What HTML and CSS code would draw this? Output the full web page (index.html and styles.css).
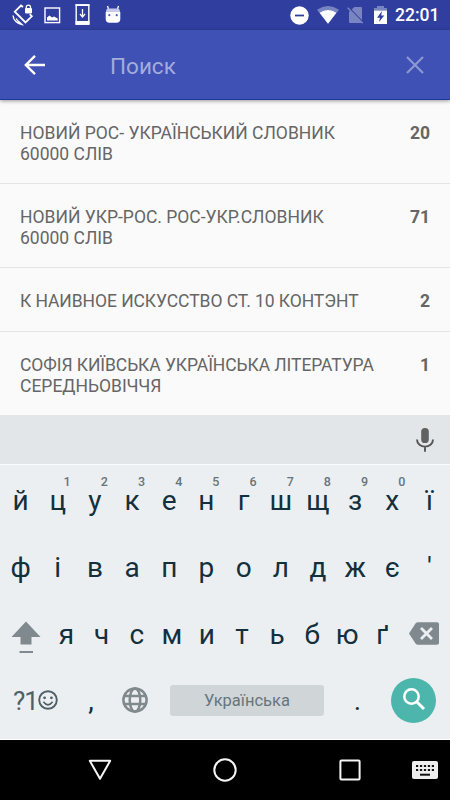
FILE: index.html
```
<!DOCTYPE html>
<html lang="uk">
<head>
    <meta charset="UTF-8">
    <meta name="viewport" content="width=device-width, initial-scale=1">
    <title>Поиск</title>
    <link rel="stylesheet" href="styles.css">
</head>
<body>
    <div class="status-bar">
        <div class="status-left">
            <svg class="ic-rotate" width="22" height="22" viewBox="0 0 22 22">
                <g fill="none" stroke="#fff">
                    <path d="M11 3 L9 1.5 L2.8 7.7 L13.5 18.5 L19.8 12.3 L17.8 10.2" stroke-width="1.8"/>
                    <path d="M1 11.5 A10 10 0 0 0 10 20.5 L7 17.8 M4.2 14.5 A8 8 0 0 0 7 17.8" stroke-width="1.4"/>
                    <path d="M14.3 5 V3.2 a2.1 2.1 0 0 1 4.2 0 V5" stroke-width="1.3"/>
                </g>
                <rect x="13" y="4" width="7" height="5.5" rx="1" fill="#fff"/>
            </svg>
            <svg class="ic-image" width="17" height="17" viewBox="0 0 17 17">
                <rect x="1" y="1" width="14.6" height="14.6" fill="none" stroke="#fff" stroke-width="1.4"/>
                <path d="M3 13.5 V10.5 L5.5 8.5 L8 10.5 L10 9.5 L13.7 11.5 V13.5 Z" fill="#fff"/>
            </svg>
            <svg class="ic-download" width="15" height="22" viewBox="0 0 15 22">
                <path d="M1.2 1 H13.8 V20 H1.2 Z" fill="none" stroke="#fff" stroke-width="1.4"/>
                <path d="M.5 17 H14.5 V20.7 H.5 Z M.5 .3 H14.5 V2 H.5 Z" fill="#fff"/>
                <path d="M7.5 5 V12 M5 10 L7.5 13 L10 10" fill="none" stroke="#fff" stroke-width="1.3"/>
            </svg>
            <svg class="ic-robot" width="16" height="19" viewBox="0 0 16 19">
                <path d="M3.5 4 L2.5 1 M12.5 4 L13.5 1" stroke="#fff" stroke-width="1.3"/>
                <path d="M1 8 V7 Q1 3 4 3.5 H12 Q15 3 15 7 V8 Z" fill="#c5caed"/>
                <path d="M.7 7 H15.3 V14 Q15.3 17.7 11.5 17.7 H4.5 Q.7 17.7 .7 14 Z" fill="#fff"/>
                <circle cx="4.3" cy="10.2" r="1.1" fill="#5060b5"/>
                <circle cx="11.7" cy="10.2" r="1.1" fill="#5060b5"/>
            </svg>
        </div>
        <div class="status-right">
            <svg class="ic-dnd" width="19" height="19" viewBox="0 0 19 19">
                <circle cx="9.5" cy="9.5" r="9.2" fill="#fff"/>
                <path d="M5 9.5 H14" stroke="#303f9f" stroke-width="1.8"/>
            </svg>
            <svg class="ic-wifi" width="22" height="18" viewBox="0 0 22 18">
                <path d="M0 3.7 Q11 -3.7 22 3.7 L11 17.8 Z" fill="#7984c3"/>
                <path d="M2.6 6.8 Q11 1.4 19.4 6.8 L11 17.8 Z" fill="#fff"/>
            </svg>
            <svg class="ic-sim" width="17" height="18" viewBox="0 0 17 18">
                <path d="M7.3 1 H14 Q15 1 15 2 V17 H3 Q2 17 2 16 V6 Z" fill="#7984c3"/>
                <path d="M2.3 2 L16.3 16.4" stroke="#303f9f" stroke-width="1.2"/>
                <path d="M.7 1.8 L15.7 17.2" stroke="#7984c3" stroke-width="1.4"/>
            </svg>
            <svg class="ic-battery" width="13" height="19" viewBox="0 0 13 19">
                <path d="M0 4.5 V2 H3 V0 H10 V2 H13 V4.5 Z" fill="#7984c3"/>
                <path d="M0 4.5 H13 V18 H0 Z" fill="#fff"/>
                <path d="M8 5 L3 11.8 H6 L5 16 L10.3 9.5 H7.2 Z" fill="#303f9f"/>
            </svg>
            <span class="clock">22:01</span>
        </div>
    </div>

    <div class="toolbar">
        <svg class="back" width="22" height="22" viewBox="0 0 22 22">
            <path d="M21 11 H3 M11 1.8 L1.8 11 L11 20.2" fill="none" stroke="#fff" stroke-width="2.4"/>
        </svg>
        <span class="search-hint">Поиск</span>
        <svg class="clear" width="18" height="18" viewBox="0 0 18 18">
            <path d="M1 1 L17 17 M17 1 L1 17" stroke="#8c97d3" stroke-width="2.2"/>
        </svg>
    </div>

    <div class="list">
        <div class="item">
            <div class="item-title">НОВИЙ РОС- УКРАЇНСЬКИЙ СЛОВНИК<br>60000 СЛІВ</div>
            <div class="item-count">20</div>
        </div>
        <div class="item">
            <div class="item-title">НОВИЙ УКР-РОС. РОС-УКР.СЛОВНИК<br>60000 СЛІВ</div>
            <div class="item-count">71</div>
        </div>
        <div class="item item-single">
            <div class="item-title tight">К НАИВНОЕ ИСКУССТВО СТ. 10 КОНТЭНТ</div>
            <div class="item-count">2</div>
        </div>
        <div class="item">
            <div class="item-title"><span class="tight">СОФІЯ КИЇВСЬКА УКРАЇНСЬКА ЛІТЕРАТУРА</span><br>СЕРЕДНЬОВІЧЧЯ</div>
            <div class="item-count">1</div>
        </div>
    </div>

    <div class="suggestions">
        <svg width="18" height="24" viewBox="0 0 18 24">
            <rect x="5.2" y="0" width="7.6" height="15" rx="3.6" fill="#616161"/>
            <path d="M1 11.5 C1 21 17 21 17 11.5 M9 18.5 V23.7" fill="none" stroke="#555" stroke-width="1.9"/>
        </svg>
    </div>

    <div class="keyboard">
        <div class="row">
            <div class="key">й</div>
            <div class="key">ц<sup>1</sup></div>
            <div class="key">у<sup>2</sup></div>
            <div class="key">к<sup>3</sup></div>
            <div class="key">е<sup>4</sup></div>
            <div class="key">н<sup>5</sup></div>
            <div class="key">г<sup>6</sup></div>
            <div class="key">ш<sup>7</sup></div>
            <div class="key">щ<sup>8</sup></div>
            <div class="key">з<sup>9</sup></div>
            <div class="key">х<sup>0</sup></div>
            <div class="key">ї</div>
        </div>
        <div class="row">
            <div class="key">ф</div>
            <div class="key">і</div>
            <div class="key">в</div>
            <div class="key">а</div>
            <div class="key">п</div>
            <div class="key">р</div>
            <div class="key">о</div>
            <div class="key">л</div>
            <div class="key">д</div>
            <div class="key">ж</div>
            <div class="key">є</div>
            <div class="key">'</div>
        </div>
        <div class="row row-third">
            <div class="key-wide">
                <svg class="shift" width="30" height="33" viewBox="0 0 30 33">
                    <path d="M15 .5 L29.5 16 H20.5 V23.5 H9.5 V16 H.5 Z M8.5 30 H22 V32 H8.5 Z" fill="#80898d"/>
                </svg>
            </div>
            <div class="key">я</div>
            <div class="key">ч</div>
            <div class="key">с</div>
            <div class="key">м</div>
            <div class="key">и</div>
            <div class="key">т</div>
            <div class="key">ь</div>
            <div class="key">б</div>
            <div class="key">ю</div>
            <div class="key">ґ</div>
            <div class="key-wide">
                <svg class="backspace" width="30" height="23" viewBox="0 0 30 23">
                    <path d="M0 11.5 L6.5 1.5 Q7.5 .3 9 .3 H28 Q30 .3 30 2 V21 Q30 22.7 28 22.7 H9 Q7.5 22.7 6.5 21.5 Z" fill="#80898d"/>
                    <path d="M12 6 L23 17 M23 6 L12 17" stroke="#eceff1" stroke-width="2.8"/>
                </svg>
            </div>
        </div>
        <div class="row">
            <div class="key-symbols">
                <span>?1</span>
                <svg width="20" height="20" viewBox="0 0 20 20">
                    <circle cx="10" cy="10" r="8.8" fill="none" stroke="#4e5f67" stroke-width="1.9"/>
                    <circle cx="6.6" cy="7.8" r="1.4" fill="#4e5f67"/>
                    <circle cx="13.4" cy="7.8" r="1.4" fill="#4e5f67"/>
                    <path d="M5.4 11.8 Q10 18 14.6 11.8" fill="none" stroke="#4e5f67" stroke-width="1.6"/>
                </svg>
            </div>
            <div class="key key-comma">,</div>
            <div class="key-globe">
                <svg width="26" height="26" viewBox="0 0 26 26">
                    <g fill="none" stroke="#80898d" stroke-width="2.5">
                        <circle cx="13" cy="13" r="11.6"/>
                        <ellipse cx="13" cy="13" rx="5.3" ry="11.6"/>
                        <path d="M2.3 9 H23.7 M2.3 17 H23.7"/>
                    </g>
                </svg>
            </div>
            <div class="space">Українська</div>
            <div class="key key-dot">.</div>
            <div class="search-btn">
                <svg width="24" height="24" viewBox="0 0 24 24">
                    <circle cx="9.5" cy="8.5" r="7.2" fill="none" stroke="#fff" stroke-width="2.5"/>
                    <path d="M14.2 13.2 L22 21" stroke="#fff" stroke-width="3"/>
                </svg>
            </div>
        </div>
    </div>

    <div class="nav-bar">
        <div class="nav-item">
            <svg width="24" height="22" viewBox="0 0 24 22">
                <path d="M1.8 1.8 H22.2 L12 19.8 Z" fill="none" stroke="#f5f5f5" stroke-width="2" stroke-linejoin="round"/>
            </svg>
        </div>
        <div class="nav-item">
            <svg width="24" height="24" viewBox="0 0 24 24">
                <circle cx="12" cy="12" r="10.7" fill="none" stroke="#f5f5f5" stroke-width="2"/>
            </svg>
        </div>
        <div class="nav-item">
            <svg width="22" height="22" viewBox="0 0 22 22">
                <rect x="1.4" y="1.4" width="19.2" height="19.2" rx="1" fill="none" stroke="#f5f5f5" stroke-width="2"/>
            </svg>
        </div>
        <svg class="ime" width="26" height="18" viewBox="0 0 26 18">
            <rect width="26" height="18" rx="2" fill="#eee"/>
            <path d="M4 5 H22 M4 9 H22" stroke="#111" stroke-width="2.2" stroke-dasharray="2.2 1.75"/>
            <path d="M8 13.7 H18" stroke="#111" stroke-width="2"/>
        </svg>
    </div>
</body>
</html>
```
FILE: styles.css
```
* {
    box-sizing: border-box;
}

body {
    margin: 0;
    width: 450px;
    height: 800px;
    overflow: hidden;
    display: flex;
    flex-direction: column;
    background-color: #fafafa;
    font-family: Roboto, "Noto Sans", sans-serif;
}

svg {
    display: block;
    flex-shrink: 0;
}

.status-bar {
    height: 30px;
    flex-shrink: 0;
    display: flex;
    justify-content: space-between;
    background-color: #303f9f;
    color: #fff;
}

.status-left {
    display: flex;
    align-items: center;
    padding-left: 12px;
}

.ic-image {
    margin-left: 10px;
}

.ic-download {
    margin-left: 14px;
}

.ic-robot {
    margin-left: 14.5px;
    margin-bottom: 2px;
}

.status-right {
    display: flex;
    align-items: center;
    padding-right: 11px;
}

.ic-wifi {
    margin-left: 8px;
}

.ic-sim {
    margin-left: 8px;
}

.ic-battery {
    margin-left: 10px;
}

.clock {
    width: 44px;
    margin-left: 8px;
    font-size: 17.5px;
    font-weight: 500;
    line-height: 30px;
    white-space: nowrap;
}

.toolbar {
    height: 70px;
    flex-shrink: 0;
    display: flex;
    align-items: center;
    padding: 0 26px 0 24px;
    background-color: #3f51b5;
    border-bottom: 1px solid #1c389c;
    box-shadow: 0 1px 4px rgba(0, 0, 0, 0.4);
    z-index: 1;
}

.search-hint {
    flex: 1;
    margin-left: 64px;
    padding-top: 3px;
    font-size: 22.5px;
    color: #a3acdc;
}

.list {
    height: 315px;
    flex-shrink: 0;
    overflow: hidden;
    color: #666;
}

.item {
    height: 84px;
    display: flex;
    justify-content: space-between;
    padding: 23px 20px 0;
    border-bottom: 1px solid #e4e4e4;
    font-size: 17.5px;
    line-height: 20.5px;
}

.item-single {
    height: 64px;
}

.item-title {
    white-space: nowrap;
}

.tight {
    letter-spacing: -0.07px;
}

.item-count {
    font-weight: bold;
}

.suggestions {
    height: 50px;
    flex-shrink: 0;
    display: flex;
    justify-content: flex-end;
    align-items: center;
    padding-right: 16px;
    background-color: #e3e6e8;
    border-bottom: 1px solid #fafbfb;
}

.keyboard {
    height: 275px;
    flex-shrink: 0;
    padding: 3px 2px 0;
    background-color: #eceff1;
    border-bottom: 1px solid #fff;
    color: #13303c;
}

.row {
    height: 66.5px;
    display: flex;
    align-items: center;
}

.key {
    flex: 1;
    position: relative;
    text-align: center;
    font-size: 28px;
    line-height: 66px;
}

.key sup {
    position: absolute;
    top: 7px;
    left: 23px;
    width: 10px;
    font-size: 12.5px;
    font-weight: 500;
    line-height: 14px;
    color: #66757c;
}

.row-third {
    padding-right: 1px;
}

.row-third .key {
    padding-top: 1px;
}

.key-wide {
    width: 47px;
    display: flex;
    justify-content: center;
}

.shift {
    margin-top: 7px;
}

.backspace {
    margin-left: 1px;
    margin-bottom: 1px;
}

.key-symbols {
    width: 70px;
    display: flex;
    align-items: center;
    padding-left: 11px;
    font-size: 26px;
    color: #4e5f67;
}

.key-symbols span {
    width: 25px;
    letter-spacing: -1px;
}

.key-symbols svg,
.key-globe svg {
    margin-bottom: 2px;
}

.key-comma {
    flex: none;
    width: 38px;
}

.key-globe {
    width: 60px;
    padding-left: 12px;
}

.space {
    width: 154px;
    height: 31px;
    border-radius: 3px;
    background-color: #d0d5d8;
    color: #66757c;
    font-size: 16.5px;
    line-height: 32px;
    text-align: center;
}

.key-dot {
    flex: none;
    width: 67px;
}

.search-btn {
    width: 45px;
    height: 45px;
    margin-bottom: 1px;
    display: flex;
    align-items: center;
    justify-content: center;
    border-radius: 50%;
    background-color: #4db6ac;
}

.nav-bar {
    flex: 1;
    position: relative;
    display: flex;
    align-items: center;
    justify-content: center;
    background-color: #000;
}

.nav-item {
    width: 125px;
    display: flex;
    justify-content: center;
}

.ime {
    position: absolute;
    right: 12px;
    top: 21px;
}
```
